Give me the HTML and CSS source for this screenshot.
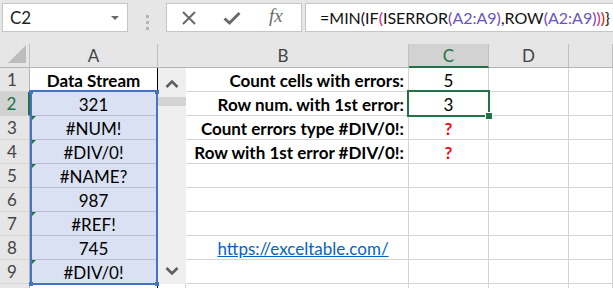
FILE: index.html
```html
<!DOCTYPE html>
<html lang="en">
<head>
    <meta charset="UTF-8">
    <title>Errors</title>
    <link rel="stylesheet" href="styles.css">
</head>
<body>
<div class="toolbar">
    <div class="namebox"><span>C2</span><span class="drop"></span></div>
    <div class="grip"><i></i><i></i><i></i></div>
    <div class="btns">
        <svg width="16" height="16" viewBox="0 0 16 16"><path d="M2 2 L14 14 M14 2 L2 14" stroke="#6a6a6a" stroke-width="2" fill="none"/></svg>
        <svg width="18" height="16" viewBox="0 0 18 16"><path d="M1.5 8.5 L6.5 13 L16.5 3" stroke="#6a6a6a" stroke-width="3" fill="none"/></svg>
        <span class="fx">fx</span>
    </div>
    <div class="formula">=MIN(IF<b class="p1">(</b>ISERROR<b class="p2">(</b><b class="ref">A2:A9</b><b class="p2">)</b>,ROW<b class="p2">(</b><b class="ref">A2:A9</b><b class="p2">)</b><b class="p1">)</b><b class="p0">)</b>}</div>
</div>

<div class="sheet">
    <div class="row r0">
        <div class="corner"><span class="tri"></span></div>
        <div class="colhdr ca">A</div>
        <div class="colhdr colhdr-b">B</div>
        <div class="colhdr cc active">C</div>
        <div class="colhdr cd">D</div>
        <div class="colhdr ce"></div>
    </div>

    <div class="row r1">
        <div class="rowhdr">1</div>
        <div class="cell a head">Data Stream</div>
        <div class="cell b">Count cells with errors:</div>
        <div class="cell c">5</div>
        <div class="cell d"></div>
        <div class="cell e"></div>
    </div>

    <div class="row r2">
        <div class="rowhdr active">2</div>
        <div class="cell a range">321</div>
        <div class="cell b">Row num. with 1st error:</div>
        <div class="cell c">3</div>
        <div class="cell d"></div>
        <div class="cell e"></div>
    </div>

    <div class="row r3">
        <div class="rowhdr">3</div>
        <div class="cell a range err">#NUM!</div>
        <div class="cell b">Count errors type #DIV/0!:</div>
        <div class="cell c q">?</div>
        <div class="cell d"></div>
        <div class="cell e"></div>
    </div>

    <div class="row r4">
        <div class="rowhdr">4</div>
        <div class="cell a range err">#DIV/0!</div>
        <div class="cell b">Row with 1st error #DIV/0!:</div>
        <div class="cell c q">?</div>
        <div class="cell d"></div>
        <div class="cell e"></div>
    </div>

    <div class="row r5">
        <div class="rowhdr">5</div>
        <div class="cell a range err">#NAME?</div>
        <div class="cell b"></div>
        <div class="cell c"></div>
        <div class="cell d"></div>
        <div class="cell e"></div>
    </div>

    <div class="row r6">
        <div class="rowhdr">6</div>
        <div class="cell a range">987</div>
        <div class="cell b"></div>
        <div class="cell c"></div>
        <div class="cell d"></div>
        <div class="cell e"></div>
    </div>

    <div class="row r7">
        <div class="rowhdr">7</div>
        <div class="cell a range err">#REF!</div>
        <div class="cell b"></div>
        <div class="cell c"></div>
        <div class="cell d"></div>
        <div class="cell e"></div>
    </div>

    <div class="row r8">
        <div class="rowhdr">8</div>
        <div class="cell a range">745</div>
        <div class="cell b link"><a href="https://exceltable.com/">https://exceltable.com/</a></div>
        <div class="cell c"></div>
        <div class="cell d"></div>
        <div class="cell e"></div>
    </div>

    <div class="row r9">
        <div class="rowhdr">9</div>
        <div class="cell a range err">#DIV/0!</div>
        <div class="cell b"></div>
        <div class="cell c"></div>
        <div class="cell d"></div>
        <div class="cell e"></div>
    </div>

    <div class="row r10">
        <div class="rowhdr"></div>
        <div class="cell a"></div>
        <div class="cell s"></div>
        <div class="cell b"></div>
        <div class="cell c"></div>
        <div class="cell d"></div>
        <div class="cell e"></div>
    </div>

    <!-- overlays -->
    <div class="scrollbar">
        <svg width="14" height="10" viewBox="0 0 14 10"><path d="M1.5 8 L7 2.5 L12.5 8" stroke="#5f5f5f" stroke-width="2.6" fill="none"/></svg>
        <div class="thumb"></div>
        <div class="track"></div>
        <svg width="14" height="10" viewBox="0 0 14 10"><path d="M1.5 2 L7 7.5 L12.5 2" stroke="#5f5f5f" stroke-width="2.6" fill="none"/></svg>
    </div>
    <div class="refbox"><i class="k tl"></i><i class="k tr"></i><i class="k bl"></i><i class="k br"></i></div>
    <div class="selbox"><i class="handle"></i></div>
</div>
</body>
</html>
```

FILE: styles.css
```css
body, html{
    margin: 0;
    padding: 0;
    width: 100%;
    height: 100%;
    overflow: hidden;
    background: #fff;
    font-family: Lato, "Liberation Sans", sans-serif;
}

/* formula bar */
.toolbar{
    display: flex;
    height: 44px;
    box-sizing: border-box;
    padding-top: 3px;
    background: #e6e6e6;
}
.namebox{
    width: 126px;
    height: 29px;
    margin-left: 2px;
    box-sizing: border-box;
    border: 1px solid #c6c6c6;
    background: #fff;
    display: flex;
    align-items: center;
    justify-content: space-between;
    padding: 0 8px 0 7px;
    font-size: 17px;
    color: #222;
}
.drop{
    width: 0;
    height: 0;
    border-left: 4px solid transparent;
    border-right: 4px solid transparent;
    border-top: 4px solid #6a6a6a;
    margin-top: 1px;
}
.grip{
    width: 38px;
    display: flex;
    flex-direction: column;
    align-items: center;
    justify-content: center;
    gap: 3px;
    padding-bottom: 2px;
}
.grip i{
    width: 3px;
    height: 3px;
    background: #b4b4b4;
}
.btns{
    width: 136px;
    height: 29px;
    box-sizing: border-box;
    border: 1px solid #c6c6c6;
    background: #fff;
    display: flex;
    align-items: center;
    padding-left: 14px;
    gap: 26px;
}
.fx{
    font-family: "Liberation Serif", serif;
    font-style: italic;
    font-size: 19px;
    color: #6a6a6a;
    margin-left: 2px;
    margin-top: -3px;
}
.formula{
    flex: 1;
    min-width: 0;
    height: 29px;
    margin-left: 3px;
    box-sizing: border-box;
    border: 1px solid #c6c6c6;
    border-right: none;
    background: #fff;
    padding-left: 14px;
    font-size: 16px;
    letter-spacing: 0;
    line-height: 27px;
    color: #111;
    white-space: nowrap;
    overflow: hidden;
}
.formula b{
    font-weight: normal;
}
.formula .ref{ color: #6a54c3; }
.formula .p2{ color: #7a3fb0; }
.formula .p1{ color: #d2237a; }
.formula .p0{ color: #d01818; }

/* grid */
.sheet{
    display: grid;
    grid-template-columns: 30px 128px 28px 223px 80px 80px 1fr;
    grid-template-rows: repeat(11, 24px);
    font-size: 17px;
}
.row{ display: contents; }
.r0 > *{ grid-row: 1; }
.r1 > *{ grid-row: 2; }
.r2 > *{ grid-row: 3; }
.r3 > *{ grid-row: 4; }
.r4 > *{ grid-row: 5; }
.r5 > *{ grid-row: 6; }
.r6 > *{ grid-row: 7; }
.r7 > *{ grid-row: 8; }
.r8 > *{ grid-row: 9; }
.r9 > *{ grid-row: 10; }
.r10 > *{ grid-row: 11; }

.corner, .rowhdr{ grid-column: 1; }
.ca, .a{ grid-column: 2; }
.s{ grid-column: 3; }
.colhdr-b{ grid-column: 3 / 5; }
.b{ grid-column: 4; }
.cc, .c{ grid-column: 5; }
.cd, .d{ grid-column: 6; }
.ce, .e{ grid-column: 7; }

.corner, .colhdr, .rowhdr{
    background: #e6e6e6;
    color: #444;
    box-sizing: border-box;
    border-right: 1px solid #c0c0c0;
    border-bottom: 1px solid #b4b4b4;
}
.corner{
    position: relative;
}
.tri{
    position: absolute;
    left: 8px;
    top: 1px;
    width: 0;
    height: 0;
    border-left: 18px solid transparent;
    border-bottom: 18px solid #bdbdbd;
}
.colhdr{
    text-align: center;
    line-height: 24px;
}
.colhdr.active{
    background: #d2d2d2;
    color: #217346;
    border-bottom: 2px solid #217346;
}
.rowhdr{
    text-align: center;
    padding-right: 5px;
    line-height: 24px;
    border-right-color: #b4b4b4;
    border-bottom-color: #d4d4d4;
}
.rowhdr.active{
    background: #d2d2d2;
    color: #217346;
    border-right: 2px solid #217346;
}
.cell{
    box-sizing: border-box;
    border-right: 1px solid #d4d4d4;
    border-bottom: 1px solid #d4d4d4;
    line-height: 25px;
    white-space: nowrap;
    overflow: hidden;
    color: #000;
}
.cell.a{
    text-align: center;
    border-right-color: #000;
    position: relative;
}
.cell.b{
    text-align: right;
    padding-right: 4px;
    font-weight: bold;
}
.cell.c{
    text-align: center;
}
.head{
    font-weight: bold;
}
.range{
    background: #d9e1f2;
    border-bottom-color: #b8bfcc;
}
.err::before{
    content: "";
    position: absolute;
    left: 0;
    top: 0;
    width: 0;
    height: 0;
    border-top: 6px solid #1d7a3c;
    border-right: 6px solid transparent;
}
.q{
    color: #ff0000;
    font-weight: bold;
}
.cell.link{
    text-align: center;
    padding-left: 16px;
    font-weight: normal;
}
.link a{
    color: #0563c1;
    text-decoration: underline;
}

/* scrollbar between panes */
.scrollbar{
    grid-column: 3;
    grid-row: 2 / 11;
    background: #efefef;
    display: flex;
    flex-direction: column;
    align-items: center;
}
.scrollbar svg{
    margin-top: 11px;
    flex: none;
}
.scrollbar svg:last-child{
    margin-top: 0;
    margin-bottom: 8px;
}
.thumb{
    width: 100%;
    height: 9px;
    margin-top: 8px;
    background: #d4d4d4;
}
.track{
    flex: 1;
}

/* referenced range A2:A9 */
.refbox{
    grid-column: 2;
    grid-row: 3 / 11;
    margin: -2px 0 -1px 0;
    border: 2px solid #4472c4;
    position: relative;
}
.k{
    position: absolute;
    width: 4px;
    height: 4px;
    background: #4472c4;
}
.tl{ left: -3px; top: -2px; }
.tr{ right: -3px; top: -2px; }
.bl{ left: -3px; bottom: -3px; }
.br{ right: -3px; bottom: -3px; }

/* active cell C2 */
.selbox{
    grid-column: 5;
    grid-row: 3;
    margin: -2px -1px -1px -2px;
    border: 2px solid #217346;
    position: relative;
}
.handle{
    position: absolute;
    right: -5px;
    bottom: -5px;
    width: 6px;
    height: 6px;
    background: #217346;
    border: 1px solid #fff;
}
```
